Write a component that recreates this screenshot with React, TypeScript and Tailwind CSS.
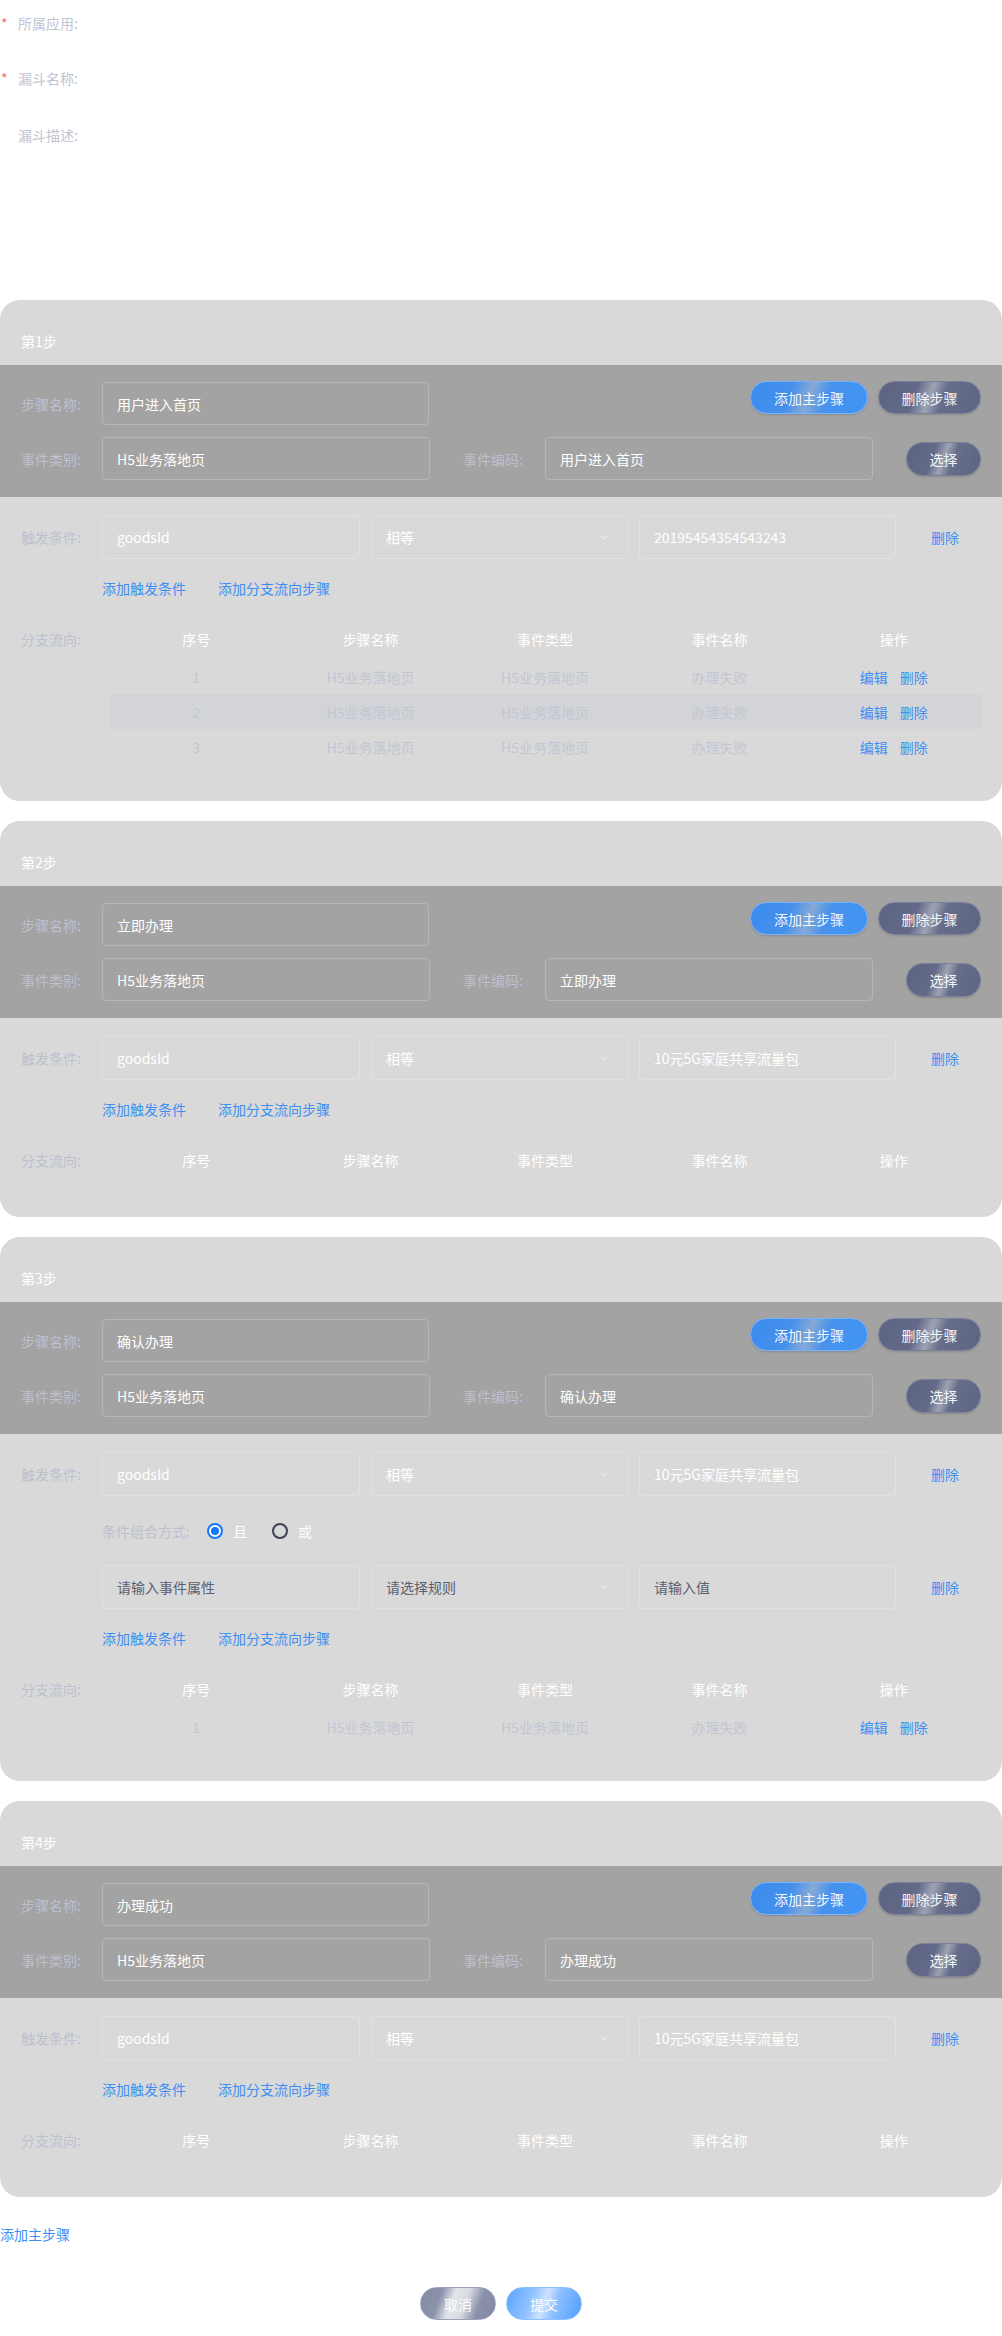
import { ChevronDown } from 'lucide-react';

type Cond = { attr: string; rule: string; value: string; empty?: boolean };
type Branch = { no: number; name: string; type: string; event: string };
type Step = {
  name: string;
  eventType: string;
  eventCode: string;
  conds: Cond[];
  combine?: boolean;
  branches: Branch[];
};

const pkg = '10元5G家庭共享流量包';

const steps: Step[] = [
  {
    name: '用户进入首页',
    eventType: 'H5业务落地页',
    eventCode: '用户进入首页',
    conds: [{ attr: 'goodsId', rule: '相等', value: '20195454354543243' }],
    branches: [1, 2, 3].map((no) => ({ no, name: 'H5业务落地页', type: 'H5业务落地页', event: '办理失败' })),
  },
  {
    name: '立即办理',
    eventType: 'H5业务落地页',
    eventCode: '立即办理',
    conds: [{ attr: 'goodsId', rule: '相等', value: pkg }],
    branches: [],
  },
  {
    name: '确认办理',
    eventType: 'H5业务落地页',
    eventCode: '确认办理',
    conds: [
      { attr: 'goodsId', rule: '相等', value: pkg },
      { attr: '请输入事件属性', rule: '请选择规则', value: '请输入值', empty: true },
    ],
    combine: true,
    branches: [{ no: 1, name: 'H5业务落地页', type: 'H5业务落地页', event: '办理失败' }],
  },
  {
    name: '办理成功',
    eventType: 'H5业务落地页',
    eventCode: '办理成功',
    conds: [{ attr: 'goodsId', rule: '相等', value: pkg }],
    branches: [],
  },
];

const blueBtn =
  'rounded-full border border-[#78b3ff] bg-[linear-gradient(110deg,#3a8bef_0%,#4690ea_34%,#86aad6_50%,#4892ec_64%,#3f94f6_100%)] text-white/95 shadow-[0_1px_2px_rgba(0,0,0,0.15)]';
const slateBtn =
  'rounded-full border border-[#7c829a] bg-[linear-gradient(110deg,#5c6483_0%,#636a88_36%,#9ea3b3_50%,#676e8b_62%,#5c6483_100%)] text-white/95 shadow-[0_1px_2px_rgba(0,0,0,0.15)]';

function Label({ children, w = 'w-[81px]' }: { children: React.ReactNode; w?: string }) {
  return <span className={`${w} shrink-0 text-[#bcc0d0]`}>{children}</span>;
}

function Field({ value, w, dark }: { value: string; w: string; dark?: boolean }) {
  return (
    <div
      className={`${w} flex h-[43px] shrink-0 items-center rounded-[4px] border px-[14px] text-white ${
        dark ? 'border-[#b6b6b6]' : 'border-[#e2e2e2]'
      }`}
    >
      {value}
    </div>
  );
}

function CondRow({ c }: { c: Cond }) {
  const tone = c.empty ? 'text-[#5b5f70]' : 'text-white';
  return (
    <div className="flex items-center">
      <Label>{c.empty ? '' : '触发条件:'}</Label>
      <div className="flex gap-[11px]">
        <div className={`flex h-[44px] w-[258px] items-center rounded-[4px] border border-[#e2e2e2] px-[14px] ${tone}`}>
          {c.attr}
        </div>
        <div className={`flex h-[44px] w-[257px] items-center justify-between rounded-[4px] border border-[#e2e2e2] pl-[14px] pr-[17px] ${tone}`}>
          {c.rule}
          <ChevronDown size={11} strokeWidth={1.5} className="text-white" />
        </div>
        <div className={`flex h-[44px] w-[257px] items-center rounded-[4px] border border-[#e2e2e2] px-[14px] ${tone}`}>
          {c.value}
        </div>
      </div>
      <span className="ml-[35px] text-[#3d8ff2]">删除</span>
    </div>
  );
}

function Radio({ checked, label }: { checked?: boolean; label: string }) {
  return (
    <span className="flex items-center gap-[10px]">
      {checked ? (
        <span className="flex h-[16px] w-[16px] items-center justify-center rounded-full border-2 border-[#1677ff] bg-white">
          <span className="h-[8px] w-[8px] rounded-full bg-[#1677ff]" />
        </span>
      ) : (
        <span className="h-[16px] w-[16px] rounded-full border-2 border-[#3b4057]" />
      )}
      <span className="text-white">{label}</span>
    </span>
  );
}

function StepCard({ step, index }: { step: Step; index: number }) {
  return (
    <section className="overflow-hidden rounded-[20px] bg-[#d9d9d9]">
      <div className="h-[65px] pl-[21px] pt-[31px] text-white">第{index + 1}步</div>

      <div className="flex flex-col gap-[12px] bg-[#a3a3a3] px-[21px] py-[17px]">
        <div className="flex items-start">
          <div className="flex h-[43px] items-center">
            <Label>步骤名称:</Label>
            <Field value={step.name} w="w-[327px]" dark />
          </div>
          <div className="-mt-px ml-auto flex gap-[10px]">
            <button className={`h-[33px] w-[118px] ${blueBtn}`}>添加主步骤</button>
            <button className={`h-[33px] w-[103px] ${slateBtn}`}>删除步骤</button>
          </div>
        </div>
        <div className="flex items-center">
          <Label>事件类别:</Label>
          <Field value={step.eventType} w="w-[328px]" dark />
          <span className="ml-[33px] w-[82px] text-[#bcc0d0]">事件编码:</span>
          <Field value={step.eventCode} w="w-[328px]" dark />
          <button className={`ml-auto h-[34px] w-[75px] ${slateBtn}`}>选择</button>
        </div>
      </div>

      <div className="px-[21px] pb-[37px] pt-[18px]">
        <div className="flex flex-col gap-[18px]">
          <CondRow c={step.conds[0]} />
          {step.combine && (
            <div className="flex h-[33px] items-center pl-[81px]">
              <span className="text-[#bcc0d0]">条件组合方式:</span>
              <span className="ml-[17px] flex gap-[25px]">
                <Radio checked label="且" />
                <Radio label="或" />
              </span>
            </div>
          )}
          {step.conds.slice(1).map((c, i) => (
            <CondRow key={i} c={c} />
          ))}
        </div>

        <div className="mt-[19px] flex gap-[32px] pl-[81px] text-[#3d8ff2]">
          <span>添加触发条件</span>
          <span>添加分支流向步骤</span>
        </div>

        <div className="mt-[21px] flex items-start">
          <div className="flex h-[40px] items-center">
            <Label>分支流向:</Label>
          </div>
          <div className="ml-[7px] flex-1">
            <div className="grid h-[40px] grid-cols-5 items-center text-center text-white">
              <span>序号</span>
              <span>步骤名称</span>
              <span>事件类型</span>
              <span>事件名称</span>
              <span>操作</span>
            </div>
            {step.branches.map((b, i) => (
              <div
                key={b.no}
                className={`grid h-[35px] grid-cols-5 items-center text-center text-[#c2c6d4] ${
                  i % 2 === 1 ? 'bg-[#d3d4d7]' : ''
                }`}
              >
                <span>{b.no}</span>
                <span>{b.name}</span>
                <span>{b.type}</span>
                <span>{b.event}</span>
                <span className="flex justify-center gap-[12px] text-[#3d8ff2]">
                  <span>编辑</span>
                  <span>删除</span>
                </span>
              </div>
            ))}
          </div>
        </div>
      </div>
    </section>
  );
}

export default function App() {
  return (
    <div className="min-h-[2336px] bg-white text-[14px] leading-[20px] [font-family:'Noto_Sans_CJK_SC','Noto_Sans',sans-serif]">
      <div className="h-[300px] pt-[13px]">
        <div className="flex">
          <span className="w-[18px] pl-[1px] text-[#f56c6c]">*</span>
          <span className="text-[#bfc3d3]">所属应用:</span>
        </div>
        <div className="mt-[35px] flex">
          <span className="w-[18px] pl-[1px] text-[#f56c6c]">*</span>
          <span className="text-[#bfc3d3]">漏斗名称:</span>
        </div>
        <div className="mt-[37px] flex">
          <span className="w-[18px]" />
          <span className="text-[#bfc3d3]">漏斗描述:</span>
        </div>
      </div>

      <div className="flex flex-col gap-[20px]">
        {steps.map((s, i) => (
          <StepCard key={i} step={s} index={i} />
        ))}
      </div>

      <div className="mt-[27px] text-[#3d8ff2]">添加主步骤</div>

      <div className="mt-[43px] flex justify-center gap-[10px] pb-[17px]">
        <button className="h-[33px] w-[76px] rounded-full border border-[#9aa0b6] bg-[linear-gradient(110deg,#848ba4_0%,#8b92aa_26%,#e2e4ea_42%,#d8dae1_58%,#8a91a9_76%,#8289a3_100%)] text-white/95">
          取消
        </button>
        <button className="h-[33px] w-[76px] rounded-full border border-[#8cc0ff] bg-[linear-gradient(110deg,#5aa5ff_0%,#92c3ff_34%,#cfe3ff_50%,#8fc0ff_64%,#4e9cff_100%)] text-white/95">
          提交
        </button>
      </div>
    </div>
  );
}
